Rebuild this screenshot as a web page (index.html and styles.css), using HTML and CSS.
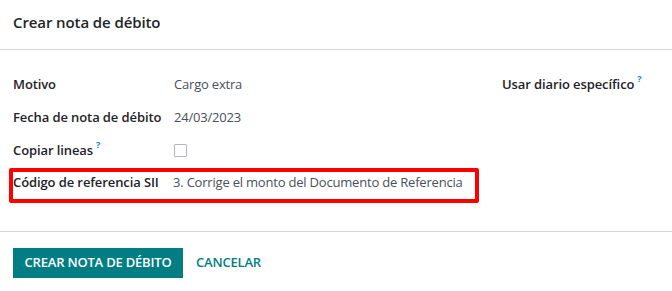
FILE: index.html
```html
<!DOCTYPE html>
<html lang="es">
<head>
<meta charset="utf-8">
<link rel="stylesheet" href="styles.css">
</head>
<body>
<div class="modal">
  <header class="modal-header">
    <h4 class="modal-title">Crear nota de débito</h4>
  </header>
  <main class="modal-body">
    <div class="group">
      <div class="row">
        <div class="label">Motivo</div>
        <div class="value">Cargo extra</div>
      </div>
      <div class="row">
        <div class="label">Fecha de nota de débito</div>
        <div class="value">24/03/2023</div>
      </div>
      <div class="row">
        <div class="label">Copiar lineas<sup class="help">?</sup></div>
        <div class="value"><span class="checkbox"></span></div>
      </div>
      <div class="row highlight">
        <div class="label">Código de referencia SII</div>
        <div class="value">3. Corrige el monto del Documento de Referencia</div>
      </div>
    </div>
    <div class="group group-right">
      <div class="row">
        <div class="label">Usar diario específico<sup class="help">?</sup></div>
      </div>
    </div>
  </main>
  <footer class="modal-footer">
    <button class="btn btn-primary">CREAR NOTA DE DÉBITO</button>
    <button class="btn btn-link">CANCELAR</button>
  </footer>
</div>
</body>
</html>
```

FILE: styles.css
```css
* { box-sizing: border-box; }
html, body { margin: 0; padding: 0; background: #fff; }
body {
  font-family: "Open Sans", "Noto Sans", sans-serif;
  font-size: 13px;
  color: #212529;
  width: 672px;
  height: 291px;
  overflow: hidden;
}
.modal-header {
  height: 50px;
  border-bottom: 1px solid #d5d5d9;
  display: flex;
  align-items: center;
  padding: 0 13px 6px;
}
.modal-title {
  margin: 0;
  font-size: 15px;
  font-weight: 600;
  color: #212529;
  letter-spacing: -0.1px;
}
.modal-body {
  display: flex;
  padding: 17px 0 28px 13px;
  border-bottom: 1px solid #d5d5d9;
}
.group { width: 489px; }
.group-right { flex: 1; }
.row {
  display: flex;
  align-items: center;
  height: 33px;
}
.label {
  width: 161px;
  font-weight: 600;
  color: #1f2329;
  flex: none;
  letter-spacing: -0.1px;
}
.value {
  color: #4a4f59;
  letter-spacing: -0.2px;
}
.help {
  color: #0d8fb0;
  font-size: 9px;
  font-weight: 700;
  margin-left: 3px;
  vertical-align: top;
  position: relative;
  top: -3px;
}
.checkbox {
  display: block;
  width: 13px;
  height: 13px;
  border: 1px solid #b4b8bd;
  border-radius: 1px;
  margin-top: 2px;
}
.highlight {
  margin: 2px 0 0 -4px;
  width: 470px;
  height: 35px;
  border: 4px solid #f00;
  border-radius: 2px;
  align-items: flex-start;
}
.highlight .label, .highlight .value { line-height: 20px; }
.highlight .label { width: 160px; }
.modal-footer {
  display: flex;
  align-items: center;
  padding: 16px 13px;
  gap: 3px;
}
.btn {
  font-family: inherit;
  font-size: 13px;
  font-weight: 600;
  border: 0;
  height: 30px;
  padding: 0 10px 2px;
  cursor: pointer;
  white-space: nowrap;
  letter-spacing: -0.2px;
}
.btn-primary { background: #017e84; color: #fff; width: 170px; padding: 0 0 2px; }
.btn-link { background: transparent; color: #017e84; }
```
